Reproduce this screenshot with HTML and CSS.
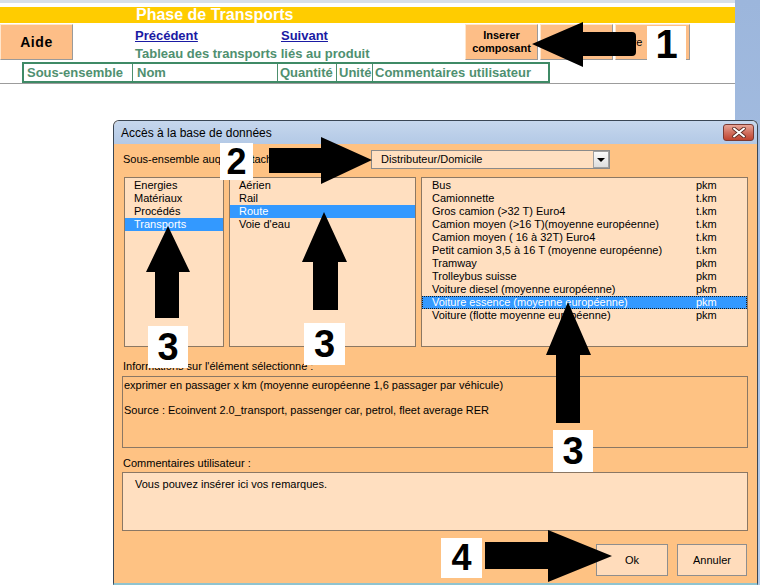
FILE: index.html
```html
<!DOCTYPE html>
<html lang="fr">
<head>
<meta charset="utf-8">
<title>Phase de Transports</title>
<link rel="stylesheet" href="styles.css">
</head>
<body>
<div class="screen">
  <div class="sheet">
    <div class="topline"></div>
    <div class="phase">Phase de Transports</div>
    <div class="toolbar">
      <div class="btn aide">Aide</div>
      <div class="links">
        <div class="navrow"><a class="nav prev">Précédent</a><a class="nav">Suivant</a></div>
        <div class="subtitle">Tableau des transports liés au produit</div>
      </div>
      <div class="tools">
        <div class="btn tool">Inserer<br>composant</div>
        <div class="btn tool">Modifier</div>
        <div class="btn tool wide">Filtre</div>
      </div>
    </div>
    <div class="thead">
      <div class="th c1">Sous-ensemble</div>
      <div class="th c2">Nom</div>
      <div class="th c3">Quantité</div>
      <div class="th c4">Unité</div>
      <div class="th c5">Commentaires utilisateur</div>
    </div>
    <div class="rule"></div>
  </div>
  <div class="strip"></div>

  <div class="dialog">
    <div class="titlebar">
      <span class="title">Accès à la base de données</span>
      <span class="close"><svg width="14" height="11" viewBox="0 0 14 11"><path d="M2 1.5 L12 9.5 M12 1.5 L2 9.5" stroke="#5a2a22" stroke-width="3.6" stroke-linecap="round"/><path d="M2 1.5 L12 9.5 M12 1.5 L2 9.5" stroke="#ffffff" stroke-width="2" stroke-linecap="round"/></svg></span>
    </div>
    <div class="body">
      <div class="row1">
        <div class="lbl">Sous-ensemble auquel rattacher le composant :</div>
        <div class="combo"><span class="combotext">Distributeur/Domicile</span><span class="drop"><span class="tri"></span></span></div>
      </div>
      <div class="lists">
        <div class="list">
          <div class="item">Energies</div>
          <div class="item">Matériaux</div>
          <div class="item">Procédés</div>
          <div class="item sel">Transports</div>
        </div>
        <div class="list">
          <div class="item">Aérien</div>
          <div class="item">Rail</div>
          <div class="item sel">Route</div>
          <div class="item">Voie d'eau</div>
        </div>
        <div class="list l3">
          <div class="item"><span class="name">Bus</span><span class="unit">pkm</span></div>
          <div class="item"><span class="name">Camionnette</span><span class="unit">t.km</span></div>
          <div class="item"><span class="name">Gros camion (&gt;32 T) Euro4</span><span class="unit">t.km</span></div>
          <div class="item"><span class="name">Camion moyen (&gt;16 T)(moyenne européenne)</span><span class="unit">t.km</span></div>
          <div class="item"><span class="name">Camion moyen ( 16 à 32T) Euro4</span><span class="unit">t.km</span></div>
          <div class="item"><span class="name">Petit camion 3,5 à 16 T (moyenne européenne)</span><span class="unit">t.km</span></div>
          <div class="item"><span class="name">Tramway</span><span class="unit">pkm</span></div>
          <div class="item"><span class="name">Trolleybus suisse</span><span class="unit">pkm</span></div>
          <div class="item"><span class="name">Voiture diesel (moyenne européenne)</span><span class="unit">pkm</span></div>
          <div class="item sel focus"><span class="name">Voiture essence (moyenne européenne)</span><span class="unit">pkm</span></div>
          <div class="item"><span class="name">Voiture (flotte moyenne européenne)</span><span class="unit">pkm</span></div>
        </div>
      </div>
      <div class="flabel info-label">Informations sur l'élément sélectionné :</div>
      <div class="infobox">exprimer en passager x km (moyenne européenne 1,6 passager par véhicule)

Source : Ecoinvent 2.0_transport, passenger car, petrol, fleet average RER</div>
      <div class="flabel comm-label">Commentaires utilisateur :</div>
      <div class="commbox">Vous pouvez insérer ici vos remarques.</div>
      <div class="actions">
        <div class="dbtn ok">Ok</div>
        <div class="dbtn cancel">Annuler</div>
      </div>
    </div>
  </div>

  <svg class="arrows" width="760" height="585" viewBox="0 0 760 585">
    <path d="M532 44 L583 22 L583 32 L632 32 Q636 32 636 36 L636 52 Q636 56 632 56 L583 56 L583 67 Z" fill="#000"/>
    <polygon points="269,148 321,148 321,137 372,160 321,184 321,173 269,173" fill="#000"/>
    <polygon points="168,226 190,272 179,272 179,318 155,318 155,272 146,272" fill="#000"/>
    <polygon points="324,212 347,262 338,262 338,310 313,310 313,262 302,262" fill="#000"/>
    <polygon points="568,302 591,355 580,355 580,423 556,423 556,355 546,355" fill="#000"/>
    <polygon points="485,542 548,542 548,530 612,556 548,582 548,569 485,569" fill="#000"/>
  </svg>
  <div class="num n1">1</div>
  <div class="num n2">2</div>
  <div class="num n3a">3</div>
  <div class="num n3b">3</div>
  <div class="num n3c">3</div>
  <div class="num n4">4</div>
</div>
</body>
</html>
```

FILE: styles.css
```css
* { box-sizing: border-box; }
body { margin: 0; }

.screen {
  width: 760px;
  height: 585px;
  position: relative;
  overflow: hidden;
  display: flex;
  background: #ffffff;
  font-family: "Liberation Sans", Arial, sans-serif;
  color: #000;
}

.sheet { width: 735px; flex: none; background: #fff; }
.strip { flex: 1; background: linear-gradient(180deg, #9cb6dc 0%, #a9c1e3 60%, #b5cbe8 100%); }

.topline { height: 3px; background: #d8e0ea; }

.phase {
  margin-top: 4px;
  height: 16px;
  background: #ffcc00;
  color: #ffffff;
  font-weight: bold;
  font-size: 16px;
  line-height: 16px;
  padding-left: 136px;
}

.toolbar {
  display: flex;
  margin-top: 1px;
  height: 36px;
}

.btn {
  background: #fdbe87;
  border: 1px solid;
  border-color: #ffe6cc #9a9a9a #9a9a9a #ffe6cc;
  display: flex;
  align-items: center;
  justify-content: center;
  text-align: center;
  font-weight: bold;
}

.aide {
  width: 73px;
  height: 36px;
  font-size: 14px;
  letter-spacing: 0.6px;
}

.links {
  margin-left: 62px;
  flex: 1;
  font-size: 13px;
  font-weight: bold;
}
.navrow { padding-top: 2px; height: 20px; line-height: 19px; }
.nav {
  color: #1a1aa3;
  text-decoration: underline;
  display: inline-block;
}
.prev { width: 146px; }
.subtitle { height: 18px; line-height: 19px; color: #4f9070; }

.tools { display: flex; gap: 2px; margin-right: 45px; }
.tool {
  width: 73px;
  height: 36px;
  font-size: 11px;
  line-height: 13px;
}
.tool.wide { width: 75px; justify-content: flex-start; padding-left: 2px; font-weight: normal; }

.thead {
  margin-top: 2px;
  margin-left: 22px;
  width: 528px;
  height: 21px;
  border: 2px solid #3f8a66;
  display: flex;
  font-size: 13px;
  font-weight: bold;
  color: #4f9070;
  line-height: 18px;
}
.th {
  border-right: 1px solid #4d8f6e;
  white-space: nowrap;
  overflow: hidden;
  padding-left: 2px;
}
.c1 { width: 109px; padding-left: 3px; }
.c2 { width: 145px; padding-left: 4px; }
.c3 { width: 59px; }
.c4 { width: 36px; }
.c5 { flex: 1; border-right: 0; }

.rule { height: 1px; background: #9c9c9c; }

/* dialog */
.dialog {
  position: absolute;
  left: 113px;
  top: 120px;
  width: 645px;
  height: 466px;
  border: 1px solid #3a4654;
  border-bottom: 3px solid #8fc3cf;
  border-radius: 6px 6px 0 0;
  background: #fec283;
  overflow: hidden;
  font-size: 11px;
}

.titlebar {
  height: 23px;
  background: linear-gradient(180deg, #c6d7ed 0%, #b3c9e6 100%);
  display: flex;
  align-items: center;
  justify-content: space-between;
  padding-left: 7px;
  padding-right: 3px;
}
.title { font-size: 12px; color: #000; }
.close {
  width: 31px;
  height: 17px;
  border: 1px solid #7a3a33;
  border-radius: 3px;
  background: linear-gradient(180deg, #e9a597 0%, #d1705f 50%, #c0432f 100%);
  display: flex;
  align-items: center;
  justify-content: center;
}

.body { padding: 0 9px 0 10px; }

.row1 {
  margin-top: 6px;
  height: 19px;
  display: flex;
}
.lbl {
  width: 248px;
  line-height: 19px;
  white-space: nowrap;
  overflow: hidden;
  margin-left: -1px;
}
.combo {
  width: 239px;
  height: 19px;
  background: #ffdfc0;
  border: 1px solid #8a8a8a;
  display: flex;
  justify-content: space-between;
  align-items: center;
}
.combotext { padding-left: 9px; line-height: 17px; }
.drop {
  width: 16px;
  height: 17px;
  border: 1px solid #a0a0a0;
  background: linear-gradient(180deg, #fafafa, #dedede);
  display: flex;
  align-items: center;
  justify-content: center;
}
.tri {
  width: 0;
  height: 0;
  border-left: 4px solid transparent;
  border-right: 4px solid transparent;
  border-top: 4px solid #000;
}

.lists {
  margin-top: 8px;
  height: 170px;
  display: grid;
  grid-template-columns: 100px 187px 1fr;
  column-gap: 5px;
}
.list {
  background: #ffdfc0;
  border: 1px solid #8c7863;
  padding-top: 1px;
  line-height: 13px;
}
.item { padding-left: 9px; white-space: nowrap; height: 13px; }
.sel { background: #3399ff; color: #ffffff; }
.l3 .item { display: flex; padding-left: 10px; }
.l3 .name { flex: 1; }
.l3 .unit { width: 51px; }
.focus { outline: 1px dotted #1a1a1a; outline-offset: -1px; }

.flabel { line-height: 13px; margin-left: -1px; }
.info-label { margin-top: 13px; }
.infobox {
  margin-top: 3px;
  margin-left: -2px;
  height: 72px;
  border: 1px solid #8a7764;
  background: #fec283;
  white-space: pre-line;
  line-height: 12.5px;
  padding: 2px 0 0 1px;
}
.comm-label { margin-top: 9px; }
.commbox {
  margin-top: 2px;
  margin-left: -2px;
  height: 59px;
  border: 1px solid #8a7764;
  background: #ffdfc0;
  padding: 5px 0 0 12px;
  line-height: 13px;
}

.actions {
  margin-top: 13px;
  display: flex;
  justify-content: flex-end;
  gap: 9px;
  padding-right: 1px;
}
.dbtn {
  height: 32px;
  background: #ffdcbb;
  border: 1px solid #8e8e8e;
  display: flex;
  align-items: center;
  justify-content: center;
}
.ok { width: 72px; }
.cancel { width: 70px; }

/* overlays */
.arrows { position: absolute; left: 0; top: 0; pointer-events: none; }

.num {
  position: absolute;
  background: #ffffff;
  color: #000;
  font-weight: bold;
  font-size: 38px;
  display: flex;
  align-items: center;
  justify-content: center;
  line-height: 1;
}
.n1 { left: 647px; top: 26px; width: 39px; height: 35px; font-size: 40px; }
.n2 { left: 220px; top: 143px; width: 33px; height: 37px; font-size: 36px; }
.n3a { left: 148px; top: 326px; width: 40px; height: 42px; }
.n3b { left: 304px; top: 323px; width: 41px; height: 42px; }
.n3c { left: 553px; top: 430px; width: 40px; height: 42px; }
.n4 { left: 441px; top: 538px; width: 41px; height: 40px; font-size: 36px; }
```
